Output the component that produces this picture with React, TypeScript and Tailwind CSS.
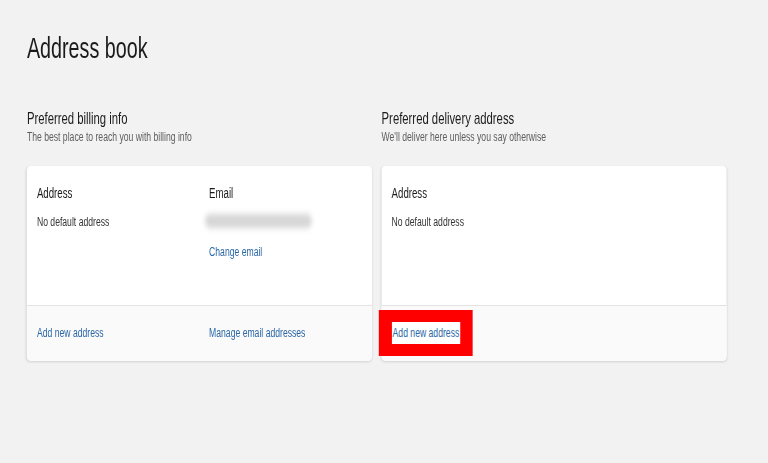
import React from "react";

type Column = {
    label: string;
    value?: string;
    blurred?: boolean;
    action?: string;
};

type Card = {
    title: string;
    subtitle: string;
    columns: Column[];
    links: string[];
    highlight?: boolean;
};

const cards: Card[] = [
    {
        title: "Preferred billing info",
        subtitle: "The best place to reach you with billing info",
        columns: [
            { label: "Address", value: "No default address" },
            { label: "Email", blurred: true, action: "Change email" },
        ],
        links: ["Add new address", "Manage email addresses"],
    },
    {
        title: "Preferred delivery address",
        subtitle: "We'll deliver here unless you say otherwise",
        columns: [{ label: "Address", value: "No default address" }],
        links: ["Add new address"],
        highlight: true,
    },
];

const InfoColumn = ({ label, value, blurred, action }: Column) => (
    <div className="flex flex-col">
        <span className="text-[14px] leading-none text-[#1b1b1b]">{label}</span>
        {value && (
            <span className="mt-[15.5px] text-[12.5px] leading-none text-[#333333]">{value}</span>
        )}
        {blurred && (
            <div className="mt-[14px] ml-[-6px] h-[14px] w-[155px] rounded-full bg-[#d6d6d6] blur-[3px]" />
        )}
        {action && (
            <a href="#" className="mt-[17.3px] text-[12.5px] leading-none text-[#2a66a6]">
                {action}
            </a>
        )}
    </div>
);

const AddressCard = ({ card }: { card: Card }) => (
    <section className="flex flex-col">
        <h2 className="text-[16.4px] leading-none text-[#1b1b1b]">{card.title}</h2>
        <p className="mt-[5px] text-[12.5px] leading-none text-[#5e5e5e]">{card.subtitle}</p>
        <div className="mt-[22px] rounded-[5px] bg-white shadow-[0_1px_3px_rgba(0,0,0,0.14)]">
            <div className="grid h-[140px] grid-cols-2 gap-x-[28px] border-b border-[#e3e3e3] px-[14.5px] pt-[20.8px]">
                {card.columns.map((col) => (
                    <InfoColumn key={col.label} {...col} />
                ))}
            </div>
            <div className="grid h-[55px] grid-cols-2 items-center gap-x-[28px] rounded-b-[5px] bg-[#fafafa] px-[14.5px]">
                {card.links.map((link) =>
                    card.highlight ? (
                        <span key={link} className="relative inline-block justify-self-start">
                            <span className="absolute -top-[12px] -bottom-[12px] -left-[19px] -right-[18px] bg-[#ff0000]" />
                            <a
                                href="#"
                                className="relative block bg-white px-[1.5px] py-[4.5px] text-[12.5px] leading-none text-[#2a66a6]"
                            >
                                {link}
                            </a>
                        </span>
                    ) : (
                        <a key={link} href="#" className="text-[12.5px] leading-none text-[#2a66a6]">
                            {link}
                        </a>
                    )
                )}
            </div>
        </div>
    </section>
);

export default function App() {
    return (
        <div className="h-[463px] w-[768px] overflow-hidden bg-[#f2f2f2]">
            <div className="w-[1113px] origin-top-left scale-x-[0.69] px-[39px] pt-[34px] font-['Liberation_Sans',Arial,sans-serif]">
                <h1 className="text-[28.6px] leading-none text-[#1b1b1b]">Address book</h1>
                <div className="mt-[47px] grid w-[1014px] grid-cols-2 gap-x-[14px]">
                    {cards.map((card) => (
                        <AddressCard key={card.title} card={card} />
                    ))}
                </div>
            </div>
        </div>
    );
}
